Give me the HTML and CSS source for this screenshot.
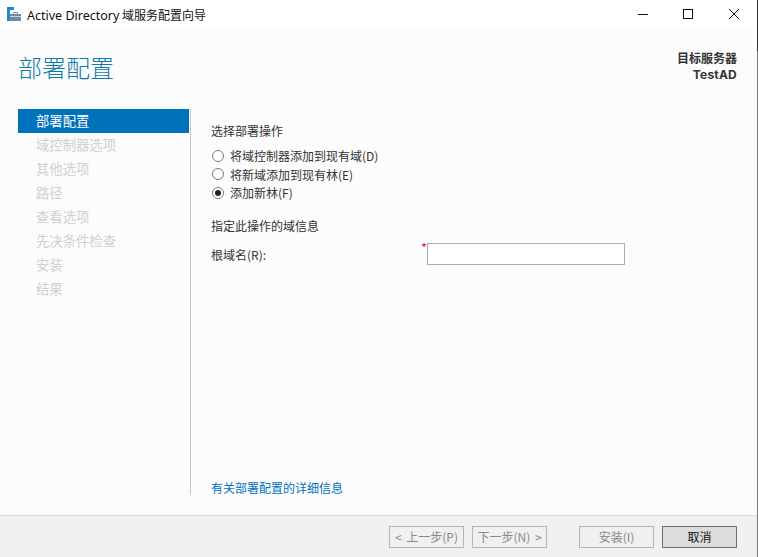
FILE: index.html
```html
<!DOCTYPE html>
<html>
<head>
<meta charset="utf-8">
<title>Active Directory 域服务配置向导</title>
<link rel="stylesheet" href="styles.css">
</head>
<body>

<div class="window">

  <div class="titlebar">
    <svg class="appIcon" width="16" height="16" viewBox="0 0 16 16">
      <rect x="0" y="0" width="7" height="3" fill="#1e88d8"/>
      <rect x="0" y="3" width="3" height="11" fill="#1e88d8"/>
      <rect x="3" y="7" width="11" height="7" fill="#6f8ba3"/>
      <rect x="3" y="9" width="11" height="1" fill="#c9d4dd"/>
      <path d="M6.5 7V5.5h4V7" fill="none" stroke="#7b8f9f" stroke-width="1"/>
    </svg>
    <span class="titleText"><span class="titleLatin">Active Directory</span> 域服务配置向导</span>
    <div class="winButtons">
      <svg class="winButton" width="46" height="30" viewBox="0 0 46 30"><path d="M19 14.5h10" stroke="#111" fill="none"/></svg>
      <svg class="winButton" width="46" height="30" viewBox="0 0 46 30"><rect x="18.5" y="9.5" width="9" height="9" stroke="#111" fill="none"/></svg>
      <svg class="winButton" width="46" height="30" viewBox="0 0 46 30"><path d="M18 9l10 10M28 9l-10 10" stroke="#111" fill="none"/></svg>
    </div>
  </div>

  <div class="main">
    <div class="pageHeader">
      <h1>部署配置</h1>
      <div class="targetServer">
        <div class="targetLabel">目标服务器</div>
        <div class="targetName">TestAD</div>
      </div>
    </div>

    <div class="pageBody">
      <div class="sideNav">
        <div class="navItem active">部署配置</div>
        <div class="navItem">域控制器选项</div>
        <div class="navItem">其他选项</div>
        <div class="navItem">路径</div>
        <div class="navItem">查看选项</div>
        <div class="navItem">先决条件检查</div>
        <div class="navItem">安装</div>
        <div class="navItem">结果</div>
      </div>

      <div class="content">
        <div class="form">
          <div class="sectionLabel">选择部署操作</div>
          <div class="radioGroup">
            <div class="radioRow"><span class="radio"></span>将域控制器添加到现有域(D)</div>
            <div class="radioRow"><span class="radio"></span>将新域添加到现有林(E)</div>
            <div class="radioRow"><span class="radio checked"></span>添加新林(F)</div>
          </div>
          <div class="sectionLabel domainInfo">指定此操作的域信息</div>
          <div class="fieldRow">
            <div class="fieldLabel">根域名(R):</div>
            <div class="fieldInput"><span class="required">*</span></div>
          </div>
        </div>
        <div class="moreInfo">有关部署配置的详细信息</div>
      </div>
    </div>
  </div>

  <div class="footer">
    <div class="btn disabled">&lt; 上一步(P)</div>
    <div class="btn disabled">下一步(N) &gt;</div>
    <div class="btn disabled install">安装(I)</div>
    <div class="btn cancel">取消</div>
  </div>

</div>

</body>
</html>
```

FILE: styles.css
```css
html, body {
  margin: 0;
  padding: 0;
}

body {
  font-family: "Noto Sans CJK SC", "Liberation Sans", sans-serif;
  font-size: 12px;
  color: #333;
  background: #fff;
}

.window {
  box-sizing: border-box;
  width: 758px;
  height: 557px;
  display: flex;
  flex-direction: column;
  overflow: hidden;
  border-right: 1px solid #777;
  border-image: linear-gradient(#333 52px, #777 52px) 1;
}

.titlebar {
  height: 30px;
  flex: none;
  display: flex;
  align-items: center;
  padding-left: 7px;
  background: #fff;
}

.appIcon {
  flex: none;
}

.titleText {
  margin-left: 4px;
  font-size: 12px;
  color: #111;
}

.titleLatin {
  font-family: "Noto Sans", sans-serif;
  font-size: 12.5px;
}

.winButtons {
  margin-left: auto;
  display: flex;
}

.winButton {
  display: block;
}

.main {
  flex: 1;
  display: flex;
  flex-direction: column;
  background: #fcfcfc;
}

.pageHeader {
  height: 79px;
  flex: none;
  display: flex;
  justify-content: space-between;
  padding: 0 20px 0 18px;
}

h1 {
  margin: 19px 0 0;
  font-size: 24px;
  font-weight: 300;
  line-height: 36px;
  color: #0f7aa8;
}

.targetServer {
  margin-top: 22px;
  text-align: right;
  font-weight: 700;
  line-height: 15px;
  color: #333;
}

.targetLabel {
  font-family: "Liberation Sans", "Noto Sans CJK SC", sans-serif;
}

.targetName {
  font-family: Inter, sans-serif;
  letter-spacing: .2px;
}

.pageBody {
  flex: 1;
  display: flex;
  padding-bottom: 20px;
}

.sideNav {
  width: 171px;
  margin-left: 18px;
  flex: none;
}

.navItem {
  height: 24px;
  line-height: 24px;
  padding-left: 18px;
  font-size: 13.33px;
  color: #d0d0d0;
}

.navItem.active {
  background: #0072bc;
  color: #fff;
}

.content {
  flex: 1;
  display: flex;
  flex-direction: column;
  justify-content: space-between;
  margin-left: 1px;
  padding-left: 20px;
  border-left: 1px solid #c8c8c8;
}

.form {
  padding-top: 14px;
}

.sectionLabel {
  line-height: 16px;
}

.radioGroup {
  margin-top: 8.5px;
  display: flex;
  flex-direction: column;
  gap: 2.5px;
}

.radioRow {
  display: flex;
  align-items: center;
  height: 16px;
}

.radio {
  width: 10px;
  height: 10px;
  margin: 0 6px 0 1px;
  border: 1px solid #7a7a7a;
  border-radius: 50%;
  background: #fff;
  position: relative;
}

.radio.checked::after {
  content: "";
  position: absolute;
  left: 2px;
  top: 2px;
  width: 6px;
  height: 6px;
  border-radius: 50%;
  background: #222;
}

.domainInfo {
  margin-top: 17.5px;
}

.fieldRow {
  margin-top: 9px;
  display: flex;
  align-items: center;
}

.fieldLabel {
  width: 216px;
  flex: none;
}

.fieldInput {
  width: 196px;
  height: 20px;
  border: 1px solid #abadb3;
  background: #fff;
  position: relative;
}

.required {
  position: absolute;
  left: -7px;
  top: -2px;
  font-size: 13px;
  line-height: 12px;
  color: #e8174f;
}

.moreInfo {
  line-height: 16px;
  margin-bottom: -1px;
  color: #0072bc;
}

.footer {
  height: 41px;
  flex: none;
  display: flex;
  align-items: center;
  padding-left: 389px;
  gap: 8px;
  background: #f0f0f0;
  border-top: 1px solid #d9d9d9;
}

.btn {
  width: 73px;
  height: 20px;
  line-height: 20px;
  text-align: center;
  border: 1px solid #adadad;
  white-space: nowrap;
  word-spacing: 2px;
}

.btn.disabled {
  color: #8a8a8a;
  border-color: #b4b4b4;
}

.btn.install {
  margin-left: 24px;
}

.btn.cancel {
  background: #dcdcdc;
  border-color: #707070;
  color: #111;
}
```
